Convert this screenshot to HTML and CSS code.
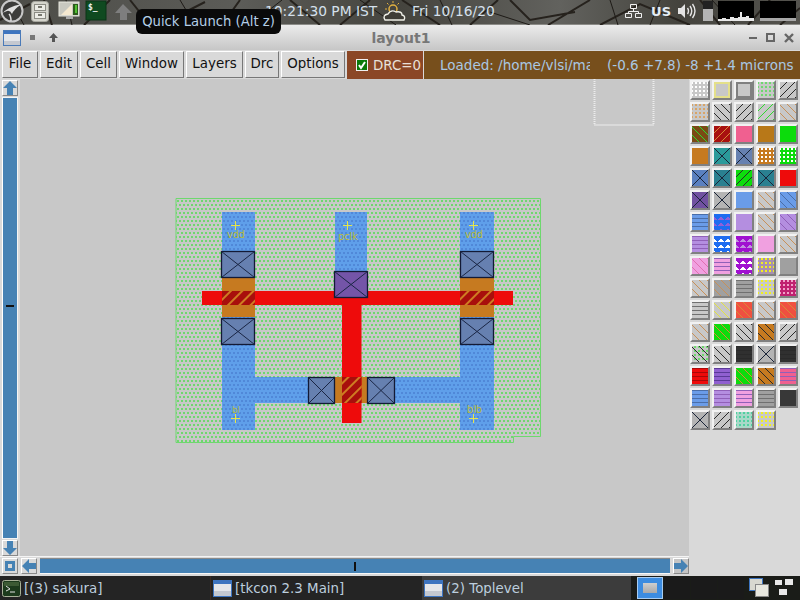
FILE: index.html

```html
<!DOCTYPE html>
<html lang="en">
<head>
  <meta charset="UTF-8" />
  <title>layout1</title>
  <link rel="stylesheet" href="styles.css">
</head>
<body>
  <!-- top panel -->
  <div class="panel">
    <svg class="wallpaper" width="800" height="25" viewBox="0 0 800 25">
      <g fill="none" stroke="#26221d" stroke-width="2">
        <path d="M0 20 L30 4 M44 0 L52 25 M84 25 L110 0 M130 0 L150 25 M160 25 L205 2 M222 25 L240 0 M290 0 L320 25 M340 25 L370 0"/>
        <path d="M402 0 L440 25 M470 25 L498 0 M510 0 L530 20 L575 12 M548 25 L590 0 M600 25 L640 4 L690 25 M700 0 L720 25 M748 25 L770 0 M780 25 L800 8"/>
      </g>
      <g fill="none" stroke="#1e1b17" stroke-width="1">
        <path d="M10 0 L24 25 M66 0 L72 25 M180 0 L195 25 M250 25 L282 0 M360 0 L396 25 M440 0 L452 25 M490 12 L530 25 M610 0 L618 25 M660 0 L650 25 M735 25 L712 0"/>
      </g>
    </svg>
    <svg class="launcher" width="140" height="25" viewBox="0 0 140 25">
      <circle cx="12" cy="12" r="10.5" fill="#3c3c3a" stroke="#c8c8c8" stroke-width="2"/>
      <path d="M1 16 Q6 8 22 5 Q14 10 12 15 Q10 11 7 12 Q3 13 1 16Z" fill="#e0e0e0"/>
      <path d="M9 15 Q11 17 11 22" fill="none" stroke="#e0e0e0" stroke-width="1.5"/>
      <rect x="31.500" y="2.500" width="17" height="20" rx="3" fill="#d4d4cc" stroke="#a8a8a0"/>
      <rect x="34.500" y="5.500" width="11" height="6" fill="#ecece6" stroke="#8c8c84"/>
      <rect x="34.500" y="13.500" width="11" height="6" fill="#ecece6" stroke="#8c8c84"/>
      <rect x="38" y="7" width="4" height="2" fill="#77776e"/>
      <rect x="38" y="15" width="4" height="2" fill="#77776e"/>
      <rect x="59" y="3" width="20" height="14" fill="#c8c8c0" stroke="#e8e8e0"/>
      <path d="M61 16 L72 5 L72 16Z" fill="#f4e8d0"/>
      <rect x="73" y="5" width="5" height="11" fill="#2c5c1c"/>
      <rect x="75" y="6" width="2" height="8" fill="#50c030"/>
      <rect x="66" y="17" width="7" height="3" fill="#aaa"/>
      <rect x="86" y="2" width="20" height="19" fill="#0f4a20" stroke="#0a3517"/>
      <text x="88" y="11" class="term-text">$_</text>
      <path d="M123 5 L132 14 L127 14 L127 21 L120 21 L120 14 L115 14Z" fill="#7e7e7e"/>
    </svg>
    <span class="clock">10:21:30 PM IST</span>
    <svg class="weather" width="24" height="22" viewBox="0 0 24 22">
      <circle cx="11" cy="9" r="4" fill="none" stroke="#e0b040" stroke-width="1.5"/>
      <path d="M11 1 V3 M3 9 H5 M5 3 L6.5 4.5 M17 3 L15.5 4.5" stroke="#e0b040" fill="none"/>
      <path d="M3 20 Q0 15 6 14 Q9 9 14 12 Q20 11 20 15 Q24 16 22 20Z" fill="#3e3c36" stroke="#f0f0e8" stroke-width="1.4"/>
    </svg>
    <span class="date">Fri 10/16/20</span>
    <div class="tray">
      <svg width="17" height="16" viewBox="0 0 17 16">
        <path d="M5.5 1.5 H11.5 V5.5 H5.5Z M0.5 10.5 H6.5 V14.5 H0.5Z M10.5 10.5 H16.5 V14.5 H10.5Z M8.5 5.5 V8.5 M3.5 10.5 V8.5 H13.5 V10.5" fill="none" stroke="#f0f0f0"/>
      </svg>
      <span class="kbd">US</span>
      <svg width="21" height="16" viewBox="0 0 21 16">
        <path d="M1 5 H4 L8 1 V15 L4 11 H1Z" fill="#e4e4e4"/>
        <path d="M10.500 5 Q12.500 8 10.500 11 M13 3 Q16.500 8 13 13 M15.500 1 Q20.500 8 15.500 15" fill="none" stroke="#e4e4e4" stroke-width="1.4"/>
      </svg>
      <div class="level"><div class="level-fill"></div></div>
      <svg class="graph" width="36" height="20" viewBox="0 0 36 20">
        <rect width="36" height="20" fill="#000"/>
        <path d="M0 20 V18 H4 V17 H8 V18 H12 V16 H16 V17 H20 V16 H22 V11 H24 V16 H28 V15 H31 V17 H36 V20Z" fill="#e8e8e8"/>
      </svg>
      <div class="mem"><div class="mem-fill"></div></div>
    </div>
    <div class="tooltip">Quick Launch (Alt z)</div>
  </div>

  <!-- title bar -->
  <div class="titlebar">
    <div class="title-left">
      <svg width="18" height="16" viewBox="0 0 18 16">
        <rect x="0.5" y="0.500" width="17" height="15" fill="#e4e6ea" stroke="#4a7ab8"/>
        <rect x="1" y="1" width="16" height="3" fill="#3d74c0"/>
        <rect x="1" y="11" width="16" height="4" fill="#c4c8d0"/>
      </svg>
      <span class="dot-btn"></span>
      <svg width="9" height="9" viewBox="0 0 9 9"><path d="M4.500 0 L9 5 H6 V9 H3 V5 H0Z" fill="#555"/></svg>
    </div>
    <div class="title-text">layout1</div>
    <div class="title-right">
      <span class="win-min"></span>
      <span class="win-max"></span>
      <svg width="10" height="10" viewBox="0 0 10 10"><path d="M1 1 L9 9 M9 1 L1 9" stroke="#666" stroke-width="2.400"/></svg>
    </div>
  </div>

  <!-- menu row -->
  <div class="menubar">
    <div class="menu w-file">File</div>
    <div class="menu w-edit">Edit</div>
    <div class="menu w-cell">Cell</div>
    <div class="menu w-window">Window</div>
    <div class="menu w-layers">Layers</div>
    <div class="menu w-drc">Drc</div>
    <div class="menu w-options">Options</div>
    <div class="drc-box">
      <svg width="12" height="12" viewBox="0 0 12 12">
        <rect x="0.500" y="0.500" width="11" height="11" fill="#0a7a0a" stroke="#f0f0f0"/>
        <path d="M3 6 L5 9 L9 3" fill="none" stroke="#fff" stroke-width="2"/>
      </svg>
      <span>DRC=0</span>
    </div>
    <div class="status">
      <span class="status-file">Loaded: /home/vlsi/ma</span>
      <span class="status-pos">(-0.6 +7.8) -8 +1.4 microns</span>
    </div>
  </div>

  <!-- main window body -->
  <div class="body">
    <div class="work">
      <div class="work-top">
        <div class="vscroll">
          <div class="sbtn">
            <svg width="14" height="14" viewBox="0 0 14 14"><path d="M7 0 L14 7 H10 V14 H4 V7 H0Z" fill="#4682b4"/></svg>
          </div>
          <div class="vtrough"><span class="vmark"></span></div>
          <div class="sbtn">
            <svg width="14" height="14" viewBox="0 0 14 14"><path d="M7 14 L14 7 H10 V0 H4 V7 H0Z" fill="#4682b4"/></svg>
          </div>
        </div>
        <svg class="canvas" width="669" height="477" viewBox="20 79 669 477">
          <defs>
            <pattern id="stip" width="4" height="8" patternUnits="userSpaceOnUse" x="177" y="200">
              <rect width="2" height="2" fill="#6ed86e"/>
              <rect x="2" y="4" width="2" height="2" fill="#6ed86e"/>
            </pattern>
            <pattern id="bluestip" width="4" height="8" patternUnits="userSpaceOnUse" x="177" y="200">
              <rect width="2" height="2" fill="#5088d8"/>
              <rect x="2" y="4" width="2" height="2" fill="#5088d8"/>
            </pattern>
            <pattern id="polyhatch" width="8" height="8" patternUnits="userSpaceOnUse" patternTransform="rotate(45)">
              <rect width="8" height="8" fill="#a80f0c"/>
              <rect width="2" height="8" fill="#cf7d22"/>
            </pattern>
          </defs>

          <path class="box-outline" d="M594.500 79 V125 H653.500 V79"/>

          <!-- well -->
          <path class="well" d="M176 198.500 H540.500 V436.500 H513.500 V442.500 H176Z"/>

          <!-- metal -->
          <g class="metal">
            <path d="M222 212 H255 V377 H335 V403 H255 V430 H222Z"/>
            <path d="M335 212 H367 V280 H335Z"/>
            <path d="M460 212 H494 V430 H460 V403 H367 V377 H460Z"/>
          </g>
          <g fill="url(#bluestip)">
            <path d="M222 212 H255 V377 H335 V403 H255 V430 H222Z"/>
            <path d="M335 212 H367 V280 H335Z"/>
            <path d="M460 212 H494 V430 H460 V403 H367 V377 H460Z"/>
          </g>

          <!-- diffusion -->
          <rect class="diff" x="222" y="277" width="33" height="40"/>
          <rect class="diff" x="460" y="277" width="34" height="40"/>
          <rect class="diff" x="335" y="377" width="32" height="26"/>

          <!-- poly -->
          <rect class="poly" x="202" y="291" width="311" height="14"/>
          <rect class="poly" x="342" y="297" width="19.500" height="126"/>
          <rect x="222" y="291" width="33" height="14" fill="url(#polyhatch)"/>
          <rect x="460" y="291" width="34" height="14" fill="url(#polyhatch)"/>
          <rect x="342" y="377" width="19.500" height="26" fill="url(#polyhatch)"/>

          <!-- contacts -->
          <g class="contact">
            <rect x="221.500" y="251.500" width="33" height="26"/><path d="M221.500 251.500 L254.500 277.500 M254.500 251.500 L221.500 277.500"/>
            <rect x="221.500" y="318.500" width="33" height="26"/><path d="M221.500 318.500 L254.500 344.500 M254.500 318.500 L221.500 344.500"/>
            <rect x="460.500" y="251.500" width="33" height="26"/><path d="M460.500 251.500 L493.500 277.500 M493.500 251.500 L460.500 277.500"/>
            <rect x="460.500" y="318.500" width="33" height="26"/><path d="M460.500 318.500 L493.500 344.500 M493.500 318.500 L460.500 344.500"/>
            <rect x="308.500" y="377.500" width="26" height="26"/><path d="M308.500 377.500 L334.500 403.500 M334.500 377.500 L308.500 403.500"/>
            <rect x="367.500" y="377.500" width="27" height="26"/><path d="M367.500 377.500 L394.500 403.500 M394.500 377.500 L367.500 403.500"/>
          </g>
          <g class="contact contact-purple">
            <rect x="334.500" y="271.500" width="33" height="26"/><path d="M334.500 271.500 L367.500 297.500 M367.500 271.500 L334.500 297.500"/>
          </g>

          <!-- labels -->
          <path class="cross" d="M231 225.500 H240 M235.500 221 V230 M343 225.500 H352 M347.500 221 V230 M469 225.500 H478 M473.500 221 V230 M231 418.500 H240 M235.500 414 V423 M469 418.500 H478 M473.500 414 V423"/>
          <text class="lbl" x="236" y="238" text-anchor="middle">vdd</text>
          <text class="lbl" x="348" y="240" text-anchor="middle">pclk</text>
          <text class="lbl" x="474" y="238" text-anchor="middle">vdd</text>
          <text class="lbl lbl-small" x="236" y="413" text-anchor="middle">bl</text>
          <text class="lbl" x="474.500" y="413" text-anchor="middle">blb</text>
        </svg>
      </div>
      <div class="hscroll">
        <div class="sbtn">
          <svg width="12" height="12" viewBox="0 0 12 12"><path d="M1 1 H11 V11 H1Z M4 4 V8 H8 V4Z" fill="#4682b4" fill-rule="evenodd"/></svg>
        </div>
        <div class="sbtn">
          <svg width="14" height="14" viewBox="0 0 14 14"><path d="M0 7 L7 0 V4 H14 V10 H7 V14Z" fill="#4682b4"/></svg>
        </div>
        <div class="htrough"><span class="hmark"></span></div>
        <div class="sbtn sbtn-dark">
          <svg width="14" height="14" viewBox="0 0 14 14"><path d="M14 7 L7 0 V4 H0 V10 H7 V14Z" fill="#4682b4"/></svg>
        </div>
      </div>
    </div>

    <!-- layer palette -->
    <div class="palette">
      <i class="tile dots c-white"></i><i class="tile frame-yellow"></i><i class="tile frame-grey"></i><i class="tile dots c-green2"></i><i class="tile fwd l-black"></i>

      <i class="tile dots c-tan"></i><i class="tile back l-black"></i><i class="tile fwd l-black"></i><i class="tile fwd l-green"></i><i class="tile back l-tan"></i>

      <i class="tile back l-green f-brown"></i><i class="tile fwd l-orange f-darkred"></i><i class="tile f-pink"></i><i class="tile f-ochre"></i><i class="tile f-green"></i>

      <i class="tile f-orange"></i><i class="tile cross-x f-teal"></i><i class="tile cross-x f-slate"></i><i class="tile dots c-white f-orange"></i><i class="tile dots c-white f-green"></i>

      <i class="tile cross-x f-blue2"></i><i class="tile cross-x f-teal2"></i><i class="tile fwd l-black f-green"></i><i class="tile cross-x f-teal2"></i><i class="tile f-red"></i>

      <i class="tile cross-x f-purple"></i><i class="tile cross-x f-grey"></i><i class="tile f-blue"></i><i class="tile back l-tan"></i><i class="tile back l-slate f-blue"></i>

      <i class="tile stripes l-slate f-blue"></i><i class="tile tri c-violet f-royal"></i><i class="tile f-lilac"></i><i class="tile back l-tan"></i><i class="tile back l-violet f-lilac"></i>

      <i class="tile stripes l-violet f-lilac"></i><i class="tile tri c-white f-royal"></i><i class="tile tri c-lilac f-magenta"></i><i class="tile f-pinklight"></i><i class="tile back l-tan"></i>

      <i class="tile back l-rose f-pinklight"></i><i class="tile stripes l-violet f-pinklight"></i><i class="tile tri c-white f-magenta"></i><i class="tile dots c-yellow f-mauve"></i><i class="tile f-midgrey"></i>

      <i class="tile back l-tan"></i><i class="tile back l-tan f-midgrey"></i><i class="tile stripes l-darkgrey f-midgrey"></i><i class="tile dots c-yellow"></i><i class="tile dots c-pinklight f-crimson"></i>

      <i class="tile stripes l-darkgrey"></i><i class="tile back l-yellow"></i><i class="tile back l-orange f-coral"></i><i class="tile back l-tan"></i><i class="tile back l-orange f-coral"></i>

      <i class="tile back l-tan"></i><i class="tile back l-orange f-green"></i><i class="tile back l-black"></i><i class="tile back l-black f-orange"></i><i class="tile fwd l-black"></i>

      <i class="tile back l-black dots-green"></i><i class="tile back l-black"></i><i class="tile stripes l-black f-dark"></i><i class="tile cross-x f-grey"></i><i class="tile stripes l-black f-dark"></i>

      <i class="tile stripes l-darkred f-red"></i><i class="tile stripes l-darkviolet f-purple2"></i><i class="tile back l-orange f-green"></i><i class="tile back l-black f-orange"></i><i class="tile stripes l-violet f-pink"></i>

      <i class="tile stripes l-slate f-blue"></i><i class="tile stripes l-violet f-lilac"></i><i class="tile stripes l-violet f-pinklight"></i><i class="tile stripes l-darkgrey f-midgrey"></i><i class="tile f-charcoal"></i>

      <i class="tile cross-x f-grey"></i><i class="tile fwd l-black"></i><i class="tile dots c-mint f-seafoam"></i><i class="tile dots c-yellow"></i>
    </div>
  </div>

  <!-- task bar -->
  <div class="taskbar">
    <div class="task task-1">
      <svg width="19" height="17" viewBox="0 0 19 17">
        <rect x="0.500" y="0.500" width="18" height="16" rx="2" fill="#1c3a1c" stroke="#a8b098"/>
        <rect x="2" y="2" width="15" height="4" fill="#3c5a34"/>
        <path d="M4 6 L8 9 L4 11 M8 12 H13" fill="none" stroke="#e0e0e0"/>
      </svg>
      <span>[(3) sakura]</span>
    </div>
    <div class="task task-2">
      <svg width="19" height="17" viewBox="0 0 19 17">
        <rect x="0.500" y="0.500" width="18" height="16" fill="#e4e6ea" stroke="#3d74c0"/>
        <rect x="1" y="1" width="17" height="3" fill="#3d74c0"/>
        <rect x="1" y="11" width="17" height="5" fill="#c4c8d0"/>
      </svg>
      <span>[tkcon 2.3 Main]</span>
    </div>
    <div class="task task-3">
      <svg width="19" height="17" viewBox="0 0 19 17">
        <rect x="0.500" y="0.500" width="18" height="16" fill="#e4e6ea" stroke="#3d74c0"/>
        <rect x="1" y="1" width="17" height="3" fill="#3d74c0"/>
        <rect x="1" y="11" width="17" height="5" fill="#c4c8d0"/>
      </svg>
      <span>(2) Toplevel</span>
    </div>
    <div class="pager">
      <div class="desk desk-on"><span class="desk-win"></span></div>
      <div class="desk"></div>
      <div class="desk"></div>
      <div class="desk"></div>
    </div>
    <svg class="bar-icons" width="46" height="20" viewBox="0 0 46 20">
      <rect x="0.500" y="0.500" width="13" height="12" fill="#d8d8d0" stroke="#3d74c0"/>
      <rect x="6.500" y="6.500" width="13" height="12" fill="#e8e8e0" stroke="#888"/>
      <rect x="26" y="2" width="7" height="5" fill="#e8e8e8"/>
      <rect x="36" y="1" width="8" height="6" fill="#e8e8e8"/>
      <rect x="30" y="11" width="8" height="6" fill="#e8e8e8"/>
    </svg>
  </div>
</body>
</html>
```

FILE: styles.css

```css
html, body {
  margin: 0;
  padding: 0;
}
body {
  width: 800px;
  height: 600px;
  overflow: hidden;
  display: flex;
  flex-direction: column;
  font-family: "DejaVu Sans", sans-serif;
  background: #d9d9d9;
}

/* top panel */
.panel {
  position: relative;
  height: 25px;
  flex: none;
  display: flex;
  align-items: center;
  background: linear-gradient(90deg, #4c4c47, #5c5c58 30%, #45443e 50%, #62625e 70%, #44433d 85%, #55544f);
  color: #d5e0ec;
  font-size: 13.800px;
  box-sizing: border-box;
  padding-bottom: 2px;
  border-bottom: 1px solid #8c8c88;
}
.wallpaper {
  position: absolute;
  left: 0;
  top: 0;
}
.launcher {
  position: relative;
  flex: none;
  margin-top: 1px;
}
.term-text {
  font: bold 8px "DejaVu Sans Mono", monospace;
  fill: #f0f0f0;
}
.clock {
  position: relative;
  margin-left: 125px;
  width: 117px;
  white-space: nowrap;
}
.weather {
  position: relative;
  flex: none;
}
.date {
  position: relative;
  margin-left: 6px;
  white-space: nowrap;
}
.tray {
  position: relative;
  margin-left: auto;
  display: flex;
  align-items: center;
  gap: 6px;
  padding-right: 4px;
}
.kbd {
  font-size: 13px;
  font-weight: bold;
  color: #e4ecf4;
  margin: 0 0 0 3px;
}
.level {
  width: 10px;
  height: 20px;
  background: #222;
  display: flex;
  align-items: flex-end;
  margin-left: -1px;
}
.level-fill {
  width: 100%;
  height: 12px;
  background: #b4b4b4;
}
.graph {
  display: block;
  margin-left: -1px;
}
.mem {
  width: 36px;
  height: 20px;
  background: #000;
  display: flex;
  align-items: flex-end;
}
.mem-fill {
  width: 100%;
  height: 3px;
  background: #a8a8a8;
}
.tooltip {
  position: absolute;
  left: 136px;
  top: 9px;
  width: 145px;
  height: 25px;
  line-height: 25px;
  text-align: center;
  border-radius: 6px;
  background: #0a0a0a;
  color: #b4cfe8;
  font-size: 13.200px;
  z-index: 2;
}

/* title bar */
.titlebar {
  height: 25px;
  flex: none;
  display: flex;
  align-items: center;
  justify-content: space-between;
  background: linear-gradient(#ececec, #c6c6c6);
}
.title-left {
  width: 130px;
  padding-left: 3px;
  display: flex;
  align-items: center;
}
.dot-btn {
  width: 5px;
  height: 5px;
  background: #777;
  margin: 0 14px 0 9px;
}
.title-text {
  font-weight: bold;
  font-size: 14px;
  color: #777;
  margin-right: 1px;
}
.title-right {
  width: 130px;
  box-sizing: border-box;
  padding-right: 6px;
  display: flex;
  align-items: center;
  justify-content: flex-end;
  gap: 9px;
}
.win-min {
  width: 8px;
  height: 2px;
  background: #666;
  margin-top: 1px;
}
.win-max {
  width: 5px;
  height: 5px;
  border: 2px solid #666;
}

/* menu row */
.menubar {
  height: 29px;
  flex: none;
  display: flex;
  box-sizing: border-box;
  padding: 1px 0 0 2px;
  background: #d9d9d9;
  font-size: 13.400px;
  color: #111;
}
.menu {
  box-sizing: border-box;
  margin-right: 2px;
  height: 27px;
  line-height: 24px;
  text-align: center;
  background: #d9d9d9;
  border: 1px solid;
  border-color: #fff #777 #777 #fff;
}
.w-file { width: 36px; }
.w-edit { width: 38px; }
.w-cell { width: 37px; }
.w-window { width: 65px; }
.w-layers { width: 57px; }
.w-drc { width: 34px; }
.w-options { width: 64px; }
.drc-box {
  width: 77px;
  height: 28px;
  box-sizing: border-box;
  padding-left: 9px;
  display: flex;
  align-items: center;
  gap: 5px;
  background: #8b4726;
  color: #e8e0d8;
  border-right: 1px solid #d9d9d9;
  white-space: nowrap;
}
.status {
  flex: 1;
  height: 28px;
  display: flex;
  align-items: center;
  background: #774f1c;
  color: #a9c8e4;
  white-space: nowrap;
  font-size: 13.500px;
}
.status-file {
  width: 150px;
  margin-left: 16px;
  overflow: hidden;
}
.status-pos {
  margin-left: 17px;
}

/* body */
.body {
  height: 497px;
  flex: none;
  display: flex;
}
.work {
  width: 689px;
  flex: none;
  display: flex;
  flex-direction: column;
}
.work-top {
  height: 477px;
  display: flex;
}
.vscroll {
  width: 20px;
  flex: none;
  box-sizing: border-box;
  padding: 1px 2px 0;
  display: flex;
  flex-direction: column;
  background: #d9d9d9;
}
.sbtn {
  width: 16px;
  height: 16px;
  flex: none;
  box-sizing: border-box;
  display: flex;
  align-items: center;
  justify-content: center;
  border: 1px solid;
  border-color: #fff #888 #888 #fff;
  background: #d9d9d9;
}
.sbtn-dark {
  background: #c4c4c4;
}
.vtrough {
  flex: 1;
  margin: 1px 0;
  background: #4682b4;
  border: 1px solid #f4f4f4;
  border-left-color: #fff;
  display: flex;
  align-items: center;
  justify-content: center;
}
.vmark {
  display: block;
  width: 8px;
  height: 2px;
  margin-top: -24px;
  background: #111;
}
.canvas {
  display: block;
  background: #c8c8c8;
}
.hscroll {
  height: 20px;
  box-sizing: border-box;
  padding: 1px 0 0 2px;
  display: flex;
  gap: 3px;
  background: #d9d9d9;
  border-top: 1px solid #f4f4f4;
}
.htrough {
  flex: 1;
  height: 14px;
  margin-top: 0;
  background: #4682b4;
  border-top: 1px solid #8a8a8a;
  border-bottom: 1px solid #f8f8f8;
  display: flex;
  align-items: center;
}
.hmark {
  display: block;
  width: 2px;
  height: 9px;
  margin-left: 314px;
  background: #111;
}

/* layout drawing */
.box-outline {
  fill: none;
  stroke: #ececec;
  stroke-width: 2;
  stroke-dasharray: 1 1;
}
.well {
  fill: url(#stip);
  stroke: #6ed86e;
}
.metal path {
  fill: #5f9fea;
}
.diff {
  fill: #c67a20;
}
.poly {
  fill: #ee0b0b;
}
.contact rect {
  fill: #6680b0;
  stroke: #131a35;
  stroke-width: 1.300;
}
.contact path {
  fill: none;
  stroke: #1a2645;
  stroke-width: 1;
}
.contact-purple rect {
  fill: #7455a8;
}
.cross {
  fill: none;
  stroke: #e6e64a;
}
.lbl {
  font: 9.600px "DejaVu Sans", sans-serif;
  fill: #bcbc34;
}
.lbl-small {
  font-size: 8px;
}

/* layer palette */
.palette {
  width: 111px;
  box-sizing: border-box;
  padding: 1px 0 0 1px;
  display: grid;
  grid-template-columns: repeat(5, 22px);
  grid-auto-rows: 22px;
  background: #d9d9d9;
}
.tile {
  display: block;
  box-sizing: border-box;
  width: 20px;
  height: 20px;
  border: 2px solid;
  border-color: #f2f2f2 #808080 #808080 #f2f2f2;
  background-color: #c8c8c8;
  --line: #111;
  --spot: #fff;
}

/* line colours */
.l-black { --line: #2a2a2a; }
.l-green { --line: #30d830; }
.l-tan { --line: #c89058; }
.l-orange { --line: #d88838; }
.l-slate { --line: #4a6ea8; }
.l-violet { --line: #9060b8; }
.l-rose { --line: #e070b0; }
.l-darkgrey { --line: #707070; }
.l-yellow { --line: #e4e440; }
.l-darkred { --line: #a80808; }
.l-darkviolet { --line: #5a3a98; }

/* spot colours */
.c-white { --spot: #fff; }
.c-green2 { --spot: #6ed86e; }
.c-tan { --spot: #d8a468; }
.c-violet { --spot: #9060d8; }
.c-lilac { --spot: #c090e0; }
.c-yellow { --spot: #f0f020; }
.c-pinklight { --spot: #f0a0c8; }
.c-mint { --spot: #50d0a0; }

/* patterns */
.dots {
  background-image: conic-gradient(var(--spot) 25%, transparent 0);
  background-size: 4px 4px;
  background-position: 1px 0;
}
.fwd {
  background-image: repeating-linear-gradient(135deg, transparent 0 4.600px, var(--line) 4.600px 5.600px);
}
.back {
  background-image: repeating-linear-gradient(45deg, transparent 0 4.600px, var(--line) 4.600px 5.600px);
}
.stripes {
  background-image: repeating-linear-gradient(0deg, transparent 0 3px, var(--line) 3px 4px);
}
.tri {
  background-image: linear-gradient(45deg, var(--spot) 25%, transparent 25%), linear-gradient(-45deg, var(--spot) 25%, transparent 25%);
  background-size: 7px 6px;
}
.cross-x {
  background-image: linear-gradient(45deg, transparent 47%, #1a2438 47% 53%, transparent 53%), linear-gradient(-45deg, transparent 47%, #1a2438 47% 53%, transparent 53%);
}
.frame-yellow {
  box-shadow: inset 0 0 0 2px #e4e08a;
}
.frame-grey {
  box-shadow: inset 0 0 0 2px #808080;
}
.dots-green {
  background-image: repeating-linear-gradient(45deg, transparent 0 4.600px, #2a2a2a 4.600px 5.600px), conic-gradient(#6ed86e 25%, transparent 0);
  background-size: auto, 4px 4px;
}

/* fills */
.f-brown { background-color: #7a4a14; }
.f-darkred { background-color: #a81010; }
.f-pink { background-color: #f06090; }
.f-ochre { background-color: #b87818; }
.f-green { background-color: #0cdc0c; }
.f-orange { background-color: #c67a20; }
.f-teal { background-color: #2a9a9a; }
.f-slate { background-color: #6680b0; }
.f-blue2 { background-color: #5a80c0; }
.f-teal2 { background-color: #2a8090; }
.f-red { background-color: #ee0b0b; }
.f-purple { background-color: #7050a0; }
.f-grey { background-color: #b4b4b4; }
.f-blue { background-color: #6a9ce8; }
.f-royal { background-color: #1e6cf0; }
.f-lilac { background-color: #b48ee0; }
.f-magenta { background-color: #a010d0; }
.f-pinklight { background-color: #f0a0e0; }
.f-mauve { background-color: #a890b0; }
.f-midgrey { background-color: #a0a0a0; }
.f-crimson { background-color: #c02070; }
.f-coral { background-color: #f05040; }
.f-dark { background-color: #303030; }
.f-purple2 { background-color: #9060d0; }
.f-charcoal { background-color: #383838; }
.f-seafoam { background-color: #a8d8c8; }

/* task bar */
.taskbar {
  height: 24px;
  flex: none;
  display: flex;
  align-items: center;
  background: #1a1c18;
  color: #bccede;
  font-size: 13.400px;
}
.task {
  height: 24px;
  box-sizing: border-box;
  display: flex;
  align-items: center;
  gap: 3px;
  white-space: nowrap;
}
.task-1 {
  width: 210px;
  padding-left: 2px;
  background: #242424;
}
.task-2 {
  width: 212px;
  padding-left: 2px;
  background: #242424;
  border-left: 1px solid #3a2a22;
}
.task-3 {
  width: 209px;
  padding-left: 2px;
  background: #3c3c3c;
}
.pager {
  margin-left: 6px;
  display: flex;
}
.desk {
  width: 26px;
  height: 22px;
  margin-right: 1px;
  background: #1a1a1a;
}
.desk-on {
  box-sizing: border-box;
  background: #3c8ce0;
  border: 1px solid #a8ccf0;
  display: flex;
  align-items: center;
  justify-content: center;
}
.desk-win {
  width: 14px;
  height: 10px;
  background: linear-gradient(#cfcfcf, #a8a8a8);
}
.bar-icons {
  margin-left: 4px;
  flex: none;
}
```
